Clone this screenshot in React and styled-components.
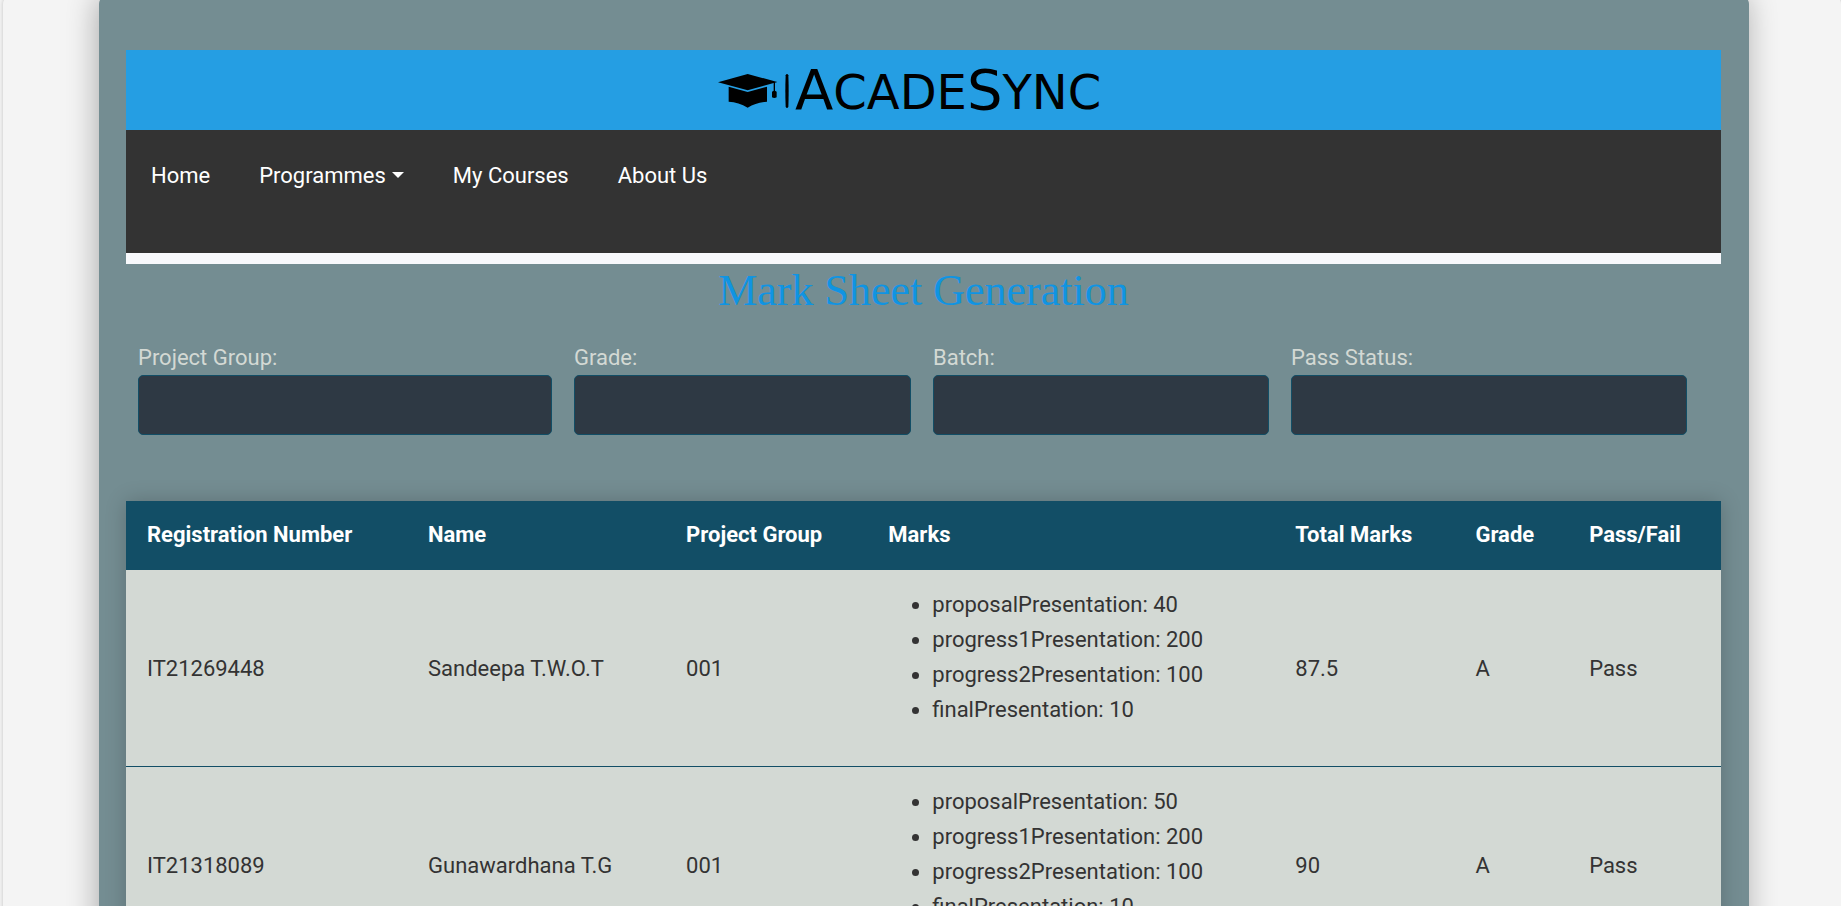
import React from "react";
import styled, { createGlobalStyle } from "styled-components";

const GlobalStyle = createGlobalStyle`
  *, *::before, *::after { box-sizing: border-box; }
  body {
    margin: 0;
    background: #f4f4f4;
    color: #333;
    font-family: Roboto, "Liberation Sans", sans-serif;
    font-size: 22px;
    line-height: 35px;
    overflow-x: hidden;
  }
`;

const Shell = styled.div`
  margin: -4px 0 0 3px;
  padding: 0 5% 0 96px;
  border-radius: 8px;
  background: #f4f4f4;
  box-shadow: 0 0 4px rgba(0, 0, 0, 0.2);
`;

const Panel = styled.main`
  padding: 54px 28px 40px 27px;
  border-radius: 8px;
  background: #748d92;
  box-shadow: -2px 0 30px rgba(0, 0, 0, 0.3);
`;

const Banner = styled.header`
  display: flex;
  align-items: center;
  justify-content: center;
  height: 80px;
  background: #259ee3;
`;

const Logo = styled.a`
  display: flex;
  align-items: center;
  gap: 6px;
  width: 411px;
  padding-top: 2px;
  color: #000;
  text-decoration: none;
`;

const LogoMark = styled.svg`
  flex: none;
  width: 71px;
  height: 34px;
`;

const Wordmark = styled.span`
  font: 400 48px/48px "DejaVu Sans", sans-serif;
  text-transform: uppercase;
`;

const Initial = styled.span`
  font-size: 56px;
`;

const Nav = styled.nav`
  height: 134px;
  padding-top: 28px;
  border-bottom: 11px solid #f8f9fc;
  background: #333;
`;

const NavList = styled.ul`
  display: flex;
  gap: 49px;
  margin: 0;
  padding: 0 25px;
  list-style: none;
`;

const NavLink = styled.a`
  display: flex;
  align-items: center;
  gap: 6px;
  color: #fff;
  text-decoration: none;
`;

const Caret = styled.span`
  margin-bottom: 2px;
  border: 6px solid transparent;
  border-top-color: currentColor;
  border-bottom: 0;
`;

const Title = styled.h1`
  margin: 0;
  color: #1094e2;
  font: 400 44px/54px "Liberation Serif", serif;
  text-align: center;
`;

const Filters = styled.form`
  display: grid;
  grid-template-columns: 414fr 337fr 336fr 396fr;
  gap: 22px;
  padding: 22px 34px 66px 12px;
`;

const Field = styled.label`
  display: flex;
  flex-direction: column;
  color: #d3d9d4;
`;

const FieldInput = styled.input`
  width: 100%;
  height: 60px;
  padding: 12px 16px;
  border: 1px solid #124e66;
  border-radius: 5px;
  background: #2e3944;
  color: #d3d9d4;
  font: inherit;
`;

const Table = styled.table`
  width: 100%;
  table-layout: fixed;
  border-collapse: separate;
  border-spacing: 0;
  background: #d3d9d4;
  box-shadow: 0 0 20px rgba(0, 0, 0, 0.2);
`;

const Column = styled.col`
  width: ${(p) => p.$share}%;
`;

const HeadCell = styled.th`
  padding: 16px 21px 18px;
  background: #124e66;
  color: #fff;
  font-weight: 700;
  text-align: left;
`;

const Cell = styled.td`
  padding: 16px 21px;
  border-bottom: 1px solid #124e66;
  vertical-align: middle;
`;

const MarkList = styled.ul`
  margin: 1px 0 23px;
  padding-left: 44px;
`;

const navItems = ["Home", "Programmes", "My Courses", "About Us"];
const filters = ["Project Group", "Grade", "Batch", "Pass Status"];
const columns = [
  ["Registration Number", 17.62],
  ["Name", 16.18],
  ["Project Group", 12.68],
  ["Marks", 25.52],
  ["Total Marks", 11.29],
  ["Grade", 7.13],
  ["Pass/Fail", 9.58],
];
const students = [
  {
    id: "IT21269448",
    name: "Sandeepa T.W.O.T",
    group: "001",
    marks: { proposalPresentation: 40, progress1Presentation: 200, progress2Presentation: 100, finalPresentation: 10 },
    total: 87.5,
    grade: "A",
    status: "Pass",
  },
  {
    id: "IT21318089",
    name: "Gunawardhana T.G",
    group: "001",
    marks: { proposalPresentation: 50, progress1Presentation: 200, progress2Presentation: 100, finalPresentation: 10 },
    total: 90,
    grade: "A",
    status: "Pass",
  },
];

function Brand() {
  return (
    <Logo href="#" aria-label="AcadeSync">
      <LogoMark viewBox="54 72 213 102" aria-hidden="true">
        <path d="M54 97 L143 72 L232 96 L225 98 V122 L230 125 V142 Q223 146 216 142 V125 L221 122 V99 L143 121 Z" />
        <path d="M86 110 L143 126 L201 110 V155 Q170 156 143 173 Q116 156 86 155 Z" />
        <path d="M257 76 Q261 68 265 76 Q267 123 265 170 Q261 178 257 170 Q255 123 257 76 Z" />
      </LogoMark>
      <Wordmark>
        <Initial>A</Initial>cade<Initial>S</Initial>ync
      </Wordmark>
    </Logo>
  );
}

export default function App() {
  return (
    <>
      <GlobalStyle />
      <Shell>
        <Panel>
          <Banner>
            <Brand />
          </Banner>
          <Nav>
            <NavList>
              {navItems.map((item) => (
                <li key={item}>
                  <NavLink href="#">
                    {item}
                    {item === "Programmes" && <Caret />}
                  </NavLink>
                </li>
              ))}
            </NavList>
          </Nav>
          <Title>Mark Sheet Generation</Title>
          <Filters>
            {filters.map((name) => (
              <Field key={name}>
                {name}:
                <FieldInput type="text" name={name} />
              </Field>
            ))}
          </Filters>
          <Table>
            <colgroup>
              {columns.map(([name, share]) => (
                <Column key={name} $share={share} />
              ))}
            </colgroup>
            <thead>
              <tr>
                {columns.map(([name]) => (
                  <HeadCell key={name} scope="col">{name}</HeadCell>
                ))}
              </tr>
            </thead>
            <tbody>
              {students.map((s) => (
                <tr key={s.id}>
                  <Cell>{s.id}</Cell>
                  <Cell>{s.name}</Cell>
                  <Cell>{s.group}</Cell>
                  <Cell>
                    <MarkList>
                      {Object.entries(s.marks).map(([part, mark]) => (
                        <li key={part}>{part}: {mark}</li>
                      ))}
                    </MarkList>
                  </Cell>
                  <Cell>{s.total}</Cell>
                  <Cell>{s.grade}</Cell>
                  <Cell>{s.status}</Cell>
                </tr>
              ))}
            </tbody>
          </Table>
        </Panel>
      </Shell>
    </>
  );
}
